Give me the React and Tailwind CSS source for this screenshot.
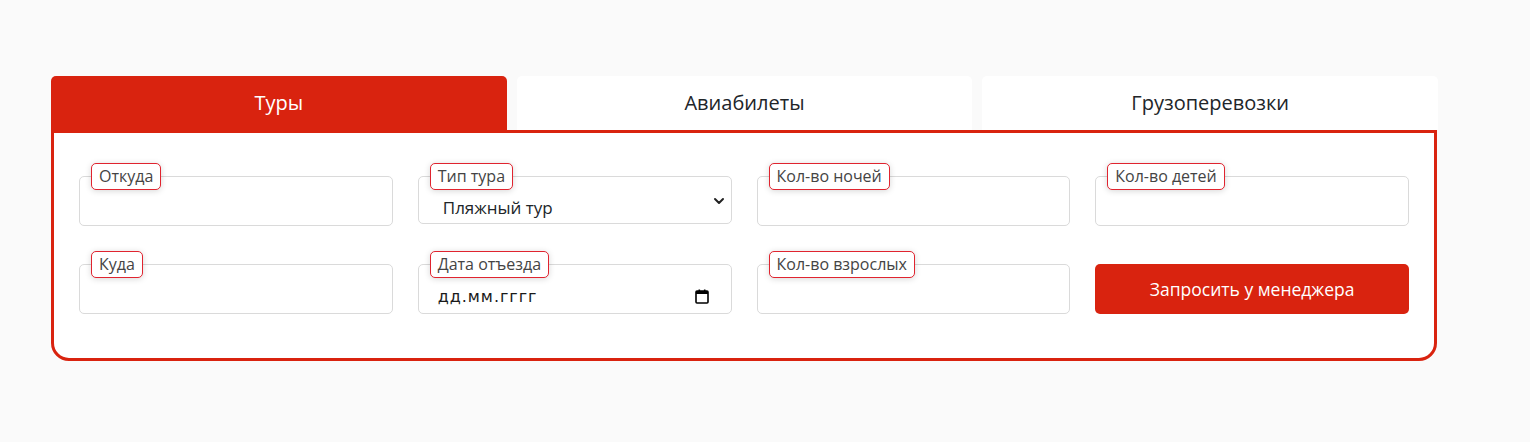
import { ChevronDown } from "lucide-react";

const font = { fontFamily: '"Open Sans", "Noto Sans", sans-serif' };

function Label({ children }) {
  return (
    <span className="absolute left-3 top-0 z-10 rounded-[5px] border border-[#e0242f] bg-white px-[7px] text-[16px] leading-[25px] text-[#444] shadow-[0_1px_6px_rgba(0,0,0,0.16)]">
      {children}
    </span>
  );
}

function Field({ label, children, h = "h-[50px]", px = "px-[20px]" }) {
  return (
    <div className="relative pt-[13px]">
      <Label>{label}</Label>
      <div
        className={`relative flex ${h} items-center rounded-[5px] border border-[#dadada] bg-white ${px} pt-[16px] text-[17px] text-[#212529]`}
      >
        {children}
      </div>
    </div>
  );
}

function CalendarIcon() {
  return (
    <svg width="14" height="15" viewBox="0 0 14 15" className="text-black">
      <rect x="1" y="2" width="12" height="12" rx="1" fill="none" stroke="currentColor" strokeWidth="1.6" />
      <rect x="1" y="2" width="12" height="3" fill="currentColor" />
      <rect x="3.5" y="0.5" width="1.6" height="3" fill="currentColor" />
      <rect x="8.9" y="0.5" width="1.6" height="3" fill="currentColor" />
    </svg>
  );
}

export default function App() {
  const tabs = ["Туры", "Авиабилеты", "Грузоперевозки"];

  return (
    <div className="min-h-[442px] bg-[#fafafa] pt-[76px]" style={font}>
      <div className="ml-[51px] w-[1387px]">
        <div className="grid grid-cols-3 gap-[10px]">
          {tabs.map((t, i) => (
            <div
              key={t}
              className={`flex h-[54px] items-center justify-center rounded-t-[5px] text-[20px] ${
                i === 0 ? "bg-[#d9230f] text-white" : "bg-white text-[#212529]"
              }`}
            >
              {t}
            </div>
          ))}
        </div>

        <div className="mr-[1px] rounded-b-[18px] border-[3px] border-[#d9230f] bg-white px-[25px] pb-[44px] pt-[30px]">
          <div className="grid grid-cols-4 gap-x-[25px] gap-y-[25px]">
            <Field label="Откуда" />
            <Field label="Тип тура" h="h-[48px]" px="px-[24px]">
              <span>Пляжный тур</span>
              <ChevronDown
                size={16}
                strokeWidth={3}
                className="absolute right-[4px] top-[16px] text-[#222]"
              />
            </Field>
            <Field label="Кол-во ночей" />
            <Field label="Кол-во детей" />

            <Field label="Куда" />
            <Field label="Дата отъезда">
              <span
                className="-ml-[1px] tracking-[0.06em] text-[#1a1a1a]"
                style={{ fontFamily: '"DejaVu Sans", sans-serif', fontSize: 16 }}
              >
                дд.мм.гггг
              </span>
              <span className="absolute right-[22px] top-[24px]">
                <CalendarIcon />
              </span>
            </Field>
            <Field label="Кол-во взрослых" />
            <div className="pt-[13px]">
              <button className="flex h-[50px] w-full items-center justify-center rounded-[5px] bg-[#d9230f] text-[17.5px] text-white">
                Запросить у менеджера
              </button>
            </div>
          </div>
        </div>
      </div>
    </div>
  );
}
